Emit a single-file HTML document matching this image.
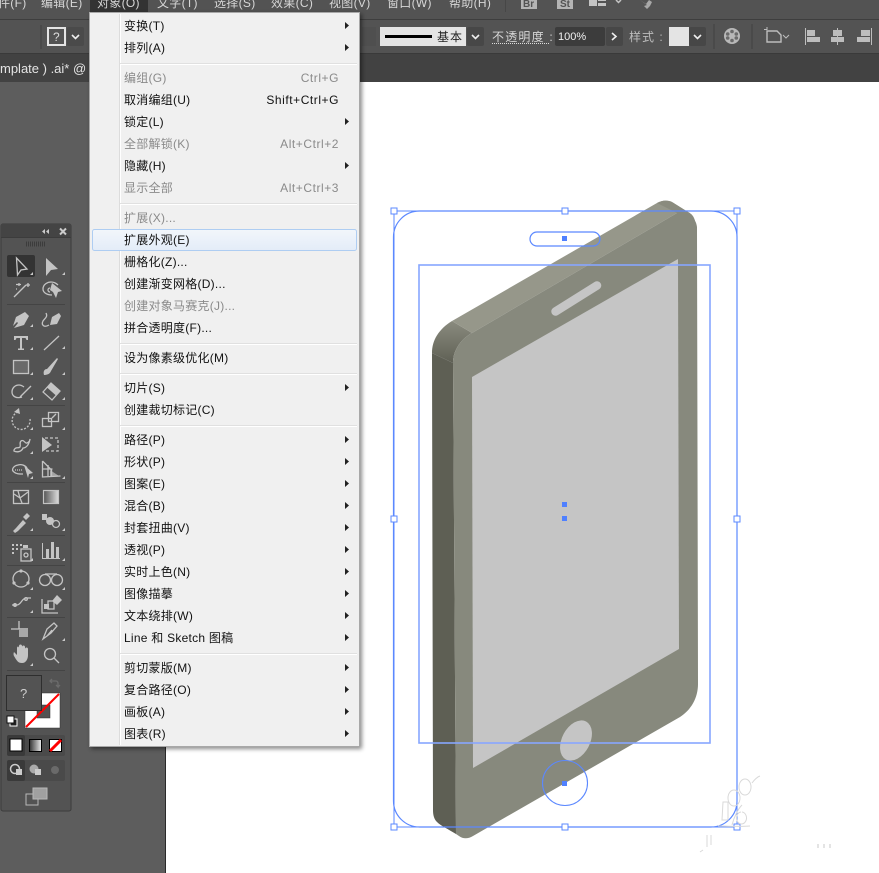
<!DOCTYPE html>
<html><head><meta charset="utf-8">
<style>
html,body{margin:0;padding:0;background:#5d5d5d;width:879px;height:873px;overflow:hidden}
svg{display:block;font-family:"Liberation Sans","Noto Sans CJK SC",sans-serif}
.m text{font-size:12px;fill:#111;letter-spacing:.25px}
.m .d{fill:#8a8a8a}
.m .r{text-anchor:end;letter-spacing:.55px}
.b{font-size:12px;fill:#d6d6d6;letter-spacing:.3px}
.i *{stroke:#c4c4c4;fill:none;stroke-width:1.300}
.i .f{fill:#c4c4c4;stroke:none}
.sel{fill:none;stroke:#5b88ff}
.h{fill:#fff;stroke:#5b88ff;stroke-width:1}
.p{fill:#4f80ff}
</style></head><body>
<svg width="879" height="873" viewBox="0 0 879 873" xmlns="http://www.w3.org/2000/svg">
<defs>
<linearGradient id="hl" x1="0" y1="0" x2="0" y2="1"><stop offset="0" stop-color="#f2f6fb"/><stop offset="1" stop-color="#e3ecf8"/></linearGradient>
<linearGradient id="cr" x1="0" y1="0" x2="0" y2="1"><stop offset="0" stop-color="#8a8b7f"/><stop offset="1" stop-color="#5f6055"/></linearGradient>
<linearGradient id="gr" x1="0" y1="0" x2="1" y2="0"><stop offset="0" stop-color="#555"/><stop offset="1" stop-color="#ddd"/></linearGradient>
<linearGradient id="gr2" x1="0" y1="0" x2="1" y2="0"><stop offset="0" stop-color="#333"/><stop offset="1" stop-color="#eee"/></linearGradient>
<filter id="sh" x="-5%" y="-5%" width="110%" height="110%"><feGaussianBlur stdDeviation="2"/></filter>
</defs>

<!-- backgrounds -->
<rect width="879" height="873" fill="#5d5d5d"/>
<rect x="166" y="82" width="713" height="791" fill="#fff"/>
<rect x="165" y="82" width="1" height="791" fill="#2a2a2a"/>
<rect width="879" height="19" fill="#535353"/>
<rect y="19" width="879" height="1" fill="#3e3e3e"/>
<rect y="20" width="879" height="33" fill="#535353"/>
<rect y="53" width="879" height="29" fill="#424242"/>
<rect y="53" width="879" height="1" fill="#3a3a3a"/>

<!-- menu bar -->
<rect x="90" y="0" width="58" height="12" fill="#333"/>
<g class="b" font-size="12">
<text x="-2" y="7" class="b">件(F)</text>
<text x="41" y="7" class="b">编辑(E)</text>
<text x="97" y="7" class="b">对象(O)</text>
<text x="157" y="7" class="b">文字(T)</text>
<text x="214" y="7" class="b">选择(S)</text>
<text x="271" y="7" class="b">效果(C)</text>
<text x="329" y="7" class="b">视图(V)</text>
<text x="387" y="7" class="b">窗口(W)</text>
<text x="449" y="7" class="b">帮助(H)</text>
</g>
<rect x="505" y="0" width="1" height="12" fill="#474747"/>
<rect x="521" y="0" width="16" height="9" fill="#b4b4b4"/>
<text x="523" y="7" font-size="10" font-weight="bold" fill="#535353">Br</text>
<rect x="557" y="0" width="16" height="9" fill="#b4b4b4"/>
<text x="560" y="7" font-size="10" font-weight="bold" fill="#535353">St</text>
<path d="M589 0h8v6h-8zM598 0h8v1h-8zM598 3h8v3h-8z" fill="#c4c4c4"/>
<path d="M616 0l2.500 2.500L621 0" fill="none" stroke="#c4c4c4" stroke-width="1.500"/>
<path d="M640 0l6 4 3-4 3 2-2 4-3 3-3-3 3-1z" fill="#a8a8a8"/>

<!-- control bar -->
<rect x="40" y="25" width="2" height="24" fill="#4a4a4a"/>
<rect x="47" y="27" width="19" height="19" fill="#e4e4e4"/>
<rect x="49" y="29" width="15" height="15" fill="#535353"/>
<text x="53" y="41" font-size="12" fill="#ddd">?</text>
<rect x="67" y="27" width="17" height="19" rx="2" fill="#4a4a4a"/>
<path d="M72 35l3.500 3.500L79 35" fill="none" stroke="#eee" stroke-width="1.600"/>
<rect x="362" y="27" width="14" height="19" fill="#4f4f4f"/>
<rect x="380" y="27" width="86" height="19" fill="#e4e4e4"/>
<rect x="385" y="35" width="47" height="3" fill="#000"/>
<text x="437" y="41" font-size="12" fill="#222" letter-spacing="1">基本</text>
<rect x="467" y="27" width="17" height="19" rx="2" fill="#474747"/>
<path d="M472 35l3.500 3.500L479 35" fill="none" stroke="#eee" stroke-width="1.600"/>
<text x="492" y="41" class="b" style="letter-spacing:1.200px">不透明度 :</text>
<path d="M492 43.500H549" stroke="#ddd" stroke-dasharray="1 1"/>
<rect x="555" y="27" width="50" height="19" rx="2" fill="#3c3c3c"/>
<text x="558" y="40" font-size="11" fill="#f0f0f0">100%</text>
<rect x="606" y="27" width="17" height="19" rx="2" fill="#474747"/>
<path d="M612 33l4 3.500-4 3.500" fill="none" stroke="#eee" stroke-width="1.600"/>
<text x="629" y="41" font-size="12" fill="#bcbcbc" letter-spacing="1">样式 :</text>
<rect x="669" y="27" width="20" height="19" fill="#e4e4e4"/>
<rect x="689" y="27" width="17" height="19" rx="2" fill="#474747"/>
<path d="M694 35l3.500 3.500L701 35" fill="none" stroke="#eee" stroke-width="1.600"/>
<rect x="713" y="24" width="2" height="25" fill="#4a4a4a"/>
<circle cx="732" cy="36" r="8" fill="#b8b8b8"/>
<g fill="#6a6a6a"><circle cx="732" cy="31.500" r="1.800"/><circle cx="732" cy="40.500" r="1.800"/><circle cx="727.700" cy="34" r="1.800"/><circle cx="736.300" cy="34" r="1.800"/><circle cx="727.700" cy="38" r="1.800"/><circle cx="736.300" cy="38" r="1.800"/></g>
<rect x="751" y="24" width="2" height="25" fill="#4a4a4a"/>
<path d="M767 31h10l4 4v7h-14z" fill="none" stroke="#bdbdbd" stroke-width="1.400"/>
<path d="M764 29.500h3M767 27v3" stroke="#bdbdbd"/>
<path d="M783 35l3 3 3-3" fill="none" stroke="#bdbdbd"/>
<g fill="#bdbdbd">
<rect x="805" y="28" width="1" height="17"/><rect x="807" y="30" width="8" height="6"/><rect x="807" y="37" width="13" height="5"/>
<rect x="837" y="28" width="1" height="17"/><rect x="833" y="30" width="9" height="6"/><rect x="831" y="37" width="13" height="5"/>
<rect x="871" y="28" width="1" height="17"/><rect x="861" y="30" width="9" height="6"/><rect x="857" y="37" width="13" height="5"/>
</g>

<!-- tab -->
<text x="0" y="73" font-size="13" fill="#e4e4e4">mplate ) .ai* @</text>

<!-- phone -->
<path d="M432 353C432 340 439 329 452 321L472 333C461 339 453 350 453 363Z" fill="url(#cr)"/>
<path d="M432 353L453 363L456 834C448 829 441 826 437 822C434 819 433 815 433 810Z" fill="#5e5f54"/>
<path d="M452 321L657 203C662 200 668 200 672 202L688 212C692 214 694 217 695 221L677 213L472 333Z" fill="#96978a"/>
<path d="M657 203C662 200 668 200 672 202L688 212C692 214 694 217 695 221L677 213Z" fill="#8a8b7e"/>
<path d="M472 333L677 213C684 210 696 216 697 227L698 684C698 698 691 710 680 717L473 836C468 839 463 839 459 836L456 834L453 363C453 350 461 339 472 333Z" fill="#87897d"/>
<path d="M472 377L678 259L679 649L473 768Z" fill="#c5c5c5"/>
<path d="M555.500 311.500L597 285.500" stroke="#c5c5c5" stroke-width="8.500" stroke-linecap="round"/>
<ellipse cx="576" cy="740.500" rx="14" ry="21.500" transform="rotate(28 576 740.500)" fill="#c5c5c5"/>

<!-- selection -->
<rect x="419" y="265" width="291" height="478" stroke-width="1.600" fill="none" stroke="#87a6ff"/>
<rect x="393.500" y="211" width="343.500" height="616" rx="26" class="sel" stroke-width="1.200"/>
<rect x="394" y="211" width="343" height="616" class="sel" stroke-width="1"/>
<rect x="530" y="232" width="70" height="14" rx="7" class="sel" stroke-width="1.200"/>
<circle cx="565" cy="783" r="22.500" class="sel" stroke-width="1.100"/>
<g class="h">
<rect x="391" y="208" width="6" height="6"/><rect x="562" y="208" width="6" height="6"/><rect x="734" y="208" width="6" height="6"/>
<rect x="391" y="516" width="6" height="6"/><rect x="734" y="516" width="6" height="6"/>
<rect x="391" y="824" width="6" height="6"/><rect x="562" y="824" width="6" height="6"/><rect x="734" y="824" width="6" height="6"/>
</g>
<g class="p"><rect x="562" y="236" width="5" height="5"/><rect x="562" y="502" width="5" height="5"/><rect x="562" y="516" width="5" height="5"/><rect x="562" y="781" width="5" height="5"/></g>

<!-- watermark -->
<g fill="none" stroke="#d9d9d9" stroke-width="1">
<ellipse cx="745" cy="787" rx="6" ry="8"/>
<ellipse cx="734" cy="798" rx="6" ry="8"/>
<path d="M752 783c3-4 5-6 8-7M723 802h5v18h-6zM742 805c-4 4-8 12-10 20M742 812a5 6 0 1 1-1 0M718 826c10 0 22 1 32 0M707 835v12M711 835v10M703 850l-3 2"/>
</g>
<g fill="#e4e4e4"><rect x="817" y="844" width="2" height="4"/><rect x="823" y="844" width="2" height="4"/><rect x="829" y="844" width="2" height="4"/></g>

<!-- tool panel -->
<rect x="1" y="224" width="70" height="587" rx="2" fill="#535353" stroke="#3c3c3c"/>
<rect x="1" y="224" width="70" height="13" fill="#444"/>
<rect x="1" y="237" width="70" height="1" fill="#3c3c3c"/>
<path d="M45 229l-3 2.500 3 2.500zM49 229l-3 2.500 3 2.500z" fill="#ccc"/>
<path d="M60 228.500l6 6M66 228.500l-6 6" stroke="#ccc" stroke-width="2"/>
<path d="M26 243h19M26 245h19" stroke="#333" stroke-dasharray="1 1" stroke-width="3" opacity=".7"/>
<rect x="7" y="255" width="28" height="22" rx="2" fill="#333"/>
<g fill="#444"><rect x="7" y="304" width="58" height="1"/><rect x="7" y="405" width="58" height="1"/><rect x="7" y="482" width="58" height="1"/><rect x="7" y="535" width="58" height="1"/><rect x="7" y="565" width="58" height="1"/><rect x="7" y="617" width="58" height="1"/><rect x="7" y="670" width="58" height="1"/></g>

<g class="i">
<path d="M16.500 258L27 269l-6 1-3.500 5z" stroke-width="1.200"/>
<path class="f" d="M46 258l12 11-7 1-5 6z"/>
<path d="M14 297l12-12" stroke-width="2.200"/><path d="M19 283v3M16 284.500h5M28 283v4M26 285h4M17 289h-1" stroke-width="1"/>
<path class="f" d="M52 283l10 8-4 1-2 6-3-6-3-2z"/>
<path d="M52 295c-6 0-9-3-9-6 0-5 5-7 8-7 3 0 5 1 7 3M50 288a2 2 0 1 0 0 4" stroke-width="1.200"/>
<path class="f" d="M13 326l3-9 9-5 4 4-5 9-10 3 4-5-1-1z"/>
<path class="f" d="M50 325l2-8 7-4 2 3-4 8z"/><path d="M49 325c-5 3-8 0-6-4 2-3 5-4 3-8" stroke-width="1.200"/>
<path class="f" d="M14 336h14v4h-1.500l-1-2H22v10.500h2V350h-6v-1.500h2V338h-3.500l-1 2H14z"/>
<path d="M44 350l15-14" stroke-width="1.300"/>
<rect x="13.500" y="360.500" width="15" height="13" style="fill:#6a6a6a"/>
<path class="f" d="M44 375c-1-3 0-6 3-6l10-11 1 1-7 12c-1 3-4 4-7 4z"/>
<path d="M22 397c-6 2-10-1-10-5 0-4 3-7 7-7 2 0 3 .5 5 2" stroke-width="1.800"/><path d="M20 397l11-11" stroke-width="3"/>
<path d="M43 392l8-9 9 8-8 9z"/><path class="f" d="M47 387.500l4-4.500 9 8-4 4.500z"/>
<path d="M30 419a9 9 0 1 1-12-7" stroke-width="1.200" stroke-dasharray="2 1.500"/><path class="f" d="M14 412l5-4 1 6z"/>
<rect x="42.500" y="418.500" width="9" height="8"/><rect x="48.500" y="412.500" width="10" height="9"/><path d="M52 418l4-4" stroke-width="1"/>
<path d="M14 450c2-4 4-1 6-3 1-2-1-4 1-6 3-2 4 3 6 2 3-1 3-4 3-4-1 6-4 9-7 9-1 3-5 5-9 3z" stroke-width="1.200"/>
<path class="f" d="M42 437l10 8-10 7z"/><path d="M45 438h13v13H45" stroke-width="1" stroke-dasharray="3 2"/>
<path d="M27 468c-2-3-6-4-9-3-5 1-7 5-4 7 2 2 5 2 9 2" stroke-width="1.200"/><path class="f" d="M24 465l9 8-4 1-1 4z"/><path d="M15 470h7" stroke-dasharray="1 1" stroke-width="1"/>
<path d="M42.500 461v16l18-1M42.500 461l9 9 0 6M48 465v11M42.500 469h10" stroke-width="1"/><path class="f" d="M50 470l9 6h-9z" opacity=".7"/>
<rect x="13.500" y="490.500" width="15" height="13" stroke-width="1.200"/><path d="M14 494l6 4 8-6M20 498l2 5M18 491l2 7" stroke-width="1"/>
<rect x="43.500" y="490.500" width="15" height="13" style="fill:url(#gr);stroke-width:1.200"/>
<path class="f" d="M13 531l3-3 7-8 3 3-8 8-3 2zM23 517l4-4 3 3-4 4z"/>
<rect x="42" y="514" width="5" height="6" class="f"/><circle cx="50" cy="521" r="4" class="f"/><circle cx="56" cy="524" r="3.500" stroke-width="1.200"/>
<path d="M12 544h2v2h-2zM16 544h2v2h-2zM12 548h2v2h-2zM20 544h2v2h-2zM16 548h2v2h-2zM12 552h2v2h-2z" class="f"/>
<rect x="21" y="549" width="10" height="12" stroke-width="1.300"/><rect x="23" y="545" width="5" height="3" class="f"/><circle cx="26" cy="555" r="2" stroke-width="1"/>
<path class="f" d="M42 558V543h1v15h17v1H42zM46 549h3v9h-3zM51 542h3v16h-3zM56 547h3v11h-3z"/>
<circle cx="21" cy="579" r="8" stroke-width="1.200"/><circle cx="21" cy="571" r="1.600" class="f"/><circle cx="14" cy="583" r="1.600" class="f"/><circle cx="28" cy="583" r="1.600" class="f"/>
<circle cx="45" cy="580" r="5.500" stroke-width="1"/><circle cx="57" cy="580" r="5.500" stroke-width="1"/><path d="M45 574h12" stroke-width="1.600"/>
<path d="M12 605h5c4 0 5-7 9-7h5" stroke-width="1.200"/><circle cx="15" cy="605" r="1.300"/><circle cx="26" cy="599" r="1.300"/>
<path d="M42 599v14h16" stroke-width="1"/><rect x="44" y="604" width="5" height="5" class="f"/><rect x="48" y="601" width="6" height="8" stroke-width="1"/><path class="f" d="M52 601l5-6 5 5-5 5z"/>
<rect x="19" y="628" width="9" height="9" class="f" style="fill:#a8a8a8"/><path d="M11 629h8M19 621v8" stroke-width="1"/>
<path d="M43 639l4-10 7-6 3 3-6 7zM47 636l5-6" stroke-width="1.200"/>
<path class="f" d="M14 652l3 3v-7c0-2 2-2 2 0v-2c0-2 3-2 3 0v1c0-2 3-2 3 0v2c0-2 3-2 3 0v6c0 4-2 8-6 8s-5-2-8-7c-1-2 0-4 0-4z"/>
<circle cx="50" cy="654" r="5.500" stroke-width="1.400"/><path d="M54 658l5 5" stroke-width="2"/>
</g>
<g fill="#c9c9c9"><path d="M33 275l-3 0 3-3zM65 275l-3 0 3-3zM33 327h-3l3-3zM65 349h-3l3-3zM33 350h-3l3-3zM33 375h-3l3-3zM65 375h-3l3-3zM33 400h-3l3-3zM65 400h-3l3-3zM33 430h-3l3-3zM65 430h-3l3-3zM33 454h-3l3-3zM33 479h-3l3-3zM65 479h-3l3-3zM33 531h-3l3-3zM65 531h-3l3-3zM33 561h-3l3-3zM65 561h-3l3-3zM33 590h-3l3-3zM65 590h-3l3-3zM33 613h-3l3-3zM65 641h-3l3-3zM33 666h-3l3-3z"/></g>

<!-- fill & stroke -->
<rect x="25" y="693" width="35" height="35" fill="#fff" stroke="#333" stroke-width=".5"/>
<rect x="37" y="705" width="13" height="13" fill="#535353" stroke="#333" stroke-width=".5"/>
<path d="M26 727L59 694" stroke="#f00" stroke-width="2"/>
<rect x="6.500" y="675.500" width="35" height="35" fill="#535353" stroke="#2e2e2e"/>
<text x="20" y="698" font-size="13" fill="#cfcfcf">?</text>
<path d="M52 679l-2 2 2 2M50 681h6c1 0 2 1 2 2v4l-2-2m2 2l2-2" fill="none" stroke="#6c6c6c" stroke-width="1.300"/>
<rect x="10" y="719" width="7" height="7" fill="#222" stroke="#fff"/>
<rect x="7" y="716" width="7" height="7" fill="#fff" stroke="#111"/>
<rect x="7" y="735" width="58" height="21" rx="2" fill="#4a4a4a"/>
<rect x="7" y="735" width="18" height="21" rx="2" fill="#3a3a3a"/>
<rect x="10" y="739" width="12" height="12" fill="#fff" stroke="#000"/>
<rect x="29.500" y="739.500" width="12" height="12" fill="url(#gr2)" stroke="#000"/>
<rect x="49.500" y="739.500" width="12" height="12" fill="#fff" stroke="#000"/>
<path d="M50 751l11-11" stroke="#f00" stroke-width="3"/>
<rect x="7" y="760" width="58" height="21" rx="2" fill="#4a4a4a"/>
<rect x="7" y="760" width="18" height="21" rx="2" fill="#3a3a3a"/>
<circle cx="15" cy="769" r="4.500" fill="none" stroke="#ccc" stroke-width="1.500"/><rect x="16" y="769" width="6" height="6" fill="#ccc"/>
<circle cx="34" cy="769" r="4.500" fill="#aaa"/><rect x="35" y="769" width="6" height="6" fill="#ccc"/>
<circle cx="55" cy="770" r="4" fill="#6a6a6a"/>
<rect x="26" y="794" width="12" height="11" fill="none" stroke="#b8b8b8"/>
<rect x="33" y="788" width="14" height="11" fill="#a0a0a0" stroke="#b8b8b8"/>

<!-- menu -->
<rect x="91" y="14" width="271" height="735" fill="#000" opacity=".45" filter="url(#sh)"/>
<rect x="89.500" y="12.500" width="270" height="734" fill="#f0f0f0" stroke="#a8a8a8"/>
<rect x="119" y="14" width="1" height="731" fill="#dcdcdc"/>
<rect x="120" y="14" width="1" height="731" fill="#fff"/>
<g fill="#e0e0e0"><rect x="120" y="63" width="237" height="1"/><rect x="120" y="203" width="237" height="1"/><rect x="120" y="343" width="237" height="1"/><rect x="120" y="373" width="237" height="1"/><rect x="120" y="425" width="237" height="1"/><rect x="120" y="653" width="237" height="1"/></g>
<g fill="#fff"><rect x="120" y="64" width="237" height="1"/><rect x="120" y="204" width="237" height="1"/><rect x="120" y="344" width="237" height="1"/><rect x="120" y="374" width="237" height="1"/><rect x="120" y="426" width="237" height="1"/><rect x="120" y="654" width="237" height="1"/></g>
<rect x="92.500" y="229.500" width="264" height="21" rx="2" fill="url(#hl)" stroke="#aecdf2"/>
<g class="m">
<text x="124" y="30">变换(T)</text>
<text x="124" y="52">排列(A)</text>
<text x="124" y="82" class="d">编组(G)</text>
<text x="339" y="82" class="d r">Ctrl+G</text>
<text x="124" y="104">取消编组(U)</text>
<text x="339" y="104" class="r">Shift+Ctrl+G</text>
<text x="124" y="126">锁定(L)</text>
<text x="124" y="148" class="d">全部解锁(K)</text>
<text x="339" y="148" class="d r">Alt+Ctrl+2</text>
<text x="124" y="170">隐藏(H)</text>
<text x="124" y="192" class="d">显示全部</text>
<text x="339" y="192" class="d r">Alt+Ctrl+3</text>
<text x="124" y="222" class="d">扩展(X)...</text>
<text x="124" y="244">扩展外观(E)</text>
<text x="124" y="266">栅格化(Z)...</text>
<text x="124" y="288">创建渐变网格(D)...</text>
<text x="124" y="310" class="d">创建对象马赛克(J)...</text>
<text x="124" y="332">拼合透明度(F)...</text>
<text x="124" y="362">设为像素级优化(M)</text>
<text x="124" y="392">切片(S)</text>
<text x="124" y="414">创建裁切标记(C)</text>
<text x="124" y="444">路径(P)</text>
<text x="124" y="466">形状(P)</text>
<text x="124" y="488">图案(E)</text>
<text x="124" y="510">混合(B)</text>
<text x="124" y="532">封套扭曲(V)</text>
<text x="124" y="554">透视(P)</text>
<text x="124" y="576">实时上色(N)</text>
<text x="124" y="598">图像描摹</text>
<text x="124" y="620">文本绕排(W)</text>
<text x="124" y="642">Line 和 Sketch 图稿</text>
<text x="124" y="672">剪切蒙版(M)</text>
<text x="124" y="694">复合路径(O)</text>
<text x="124" y="716">画板(A)</text>
<text x="124" y="738">图表(R)</text>
</g>
<g fill="#222"><path d="M345 22l4 3.500-4 3.500zM345 44l4 3.500-4 3.500zM345 118l4 3.500-4 3.500zM345 162l4 3.500-4 3.500zM345 384l4 3.500-4 3.500zM345 436l4 3.500-4 3.500zM345 458l4 3.500-4 3.500zM345 480l4 3.500-4 3.500zM345 502l4 3.500-4 3.500zM345 524l4 3.500-4 3.500zM345 546l4 3.500-4 3.500zM345 568l4 3.500-4 3.500zM345 590l4 3.500-4 3.500zM345 612l4 3.500-4 3.500zM345 634l4 3.500-4 3.500zM345 664l4 3.500-4 3.500zM345 686l4 3.500-4 3.500zM345 708l4 3.500-4 3.500zM345 730l4 3.500-4 3.500z"/></g>
</svg>
</body></html>
